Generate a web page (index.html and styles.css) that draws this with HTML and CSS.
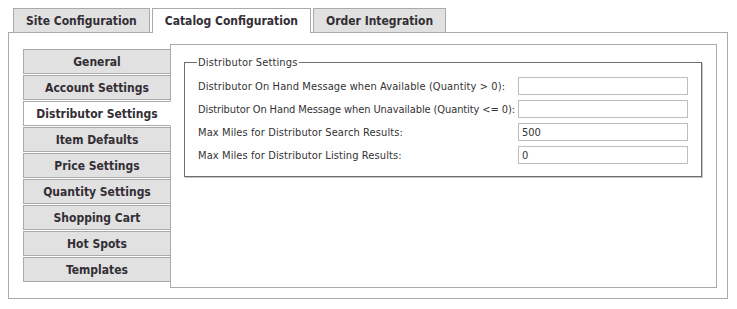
FILE: index.html
```html
<!DOCTYPE html>
<html>
<head>
<meta charset="utf-8">
<link rel="stylesheet" href="styles.css">
</head>
<body>
<div class="tabs">
  <div class="tab">Site Configuration</div>
  <div class="tab active">Catalog Configuration</div>
  <div class="tab">Order Integration</div>
</div>
<div class="panel">
  <div class="nav">
    <div class="nav-item">General</div>
    <div class="nav-item">Account Settings</div>
    <div class="nav-item active">Distributor Settings</div>
    <div class="nav-item">Item Defaults</div>
    <div class="nav-item">Price Settings</div>
    <div class="nav-item">Quantity Settings</div>
    <div class="nav-item">Shopping Cart</div>
    <div class="nav-item">Hot Spots</div>
    <div class="nav-item">Templates</div>
  </div>
  <div class="content">
    <fieldset class="group">
      <legend class="group-title">Distributor Settings</legend>
      <div class="form">
        <label class="lbl">Distributor On Hand Message when Available (Quantity &gt; 0):</label>
        <input class="field" type="text" value="">
        <label class="lbl lbl-tight">Distributor On Hand Message when Unavailable (Quantity &lt;= 0):</label>
        <input class="field" type="text" value="">
        <label class="lbl">Max Miles for Distributor Search Results:</label>
        <input class="field" type="text" value="500">
        <label class="lbl">Max Miles for Distributor Listing Results:</label>
        <input class="field" type="text" value="0">
      </div>
    </fieldset>
  </div>
</div>
</body>
</html>
```
FILE: styles.css
```css
* { box-sizing: border-box; }
body {
  margin: 8px;
  background: #fff;
  font-family: "DejaVu Sans Condensed", "DejaVu Sans", sans-serif;
  color: #333;
}
.tabs {
  display: flex;
  gap: 2px;
  padding-left: 5px;
  height: 24px;
  position: relative;
  z-index: 1;
}
.tab {
  height: 24px;
  padding: 1px 12px 0;
  border: 1px solid #aaa;
  border-bottom: none;
  background: #e1e1e1;
  font-weight: bold;
  font-size: 12px;
  line-height: 23px;
  color: #332e35;
}
.tab.active {
  background: #fff;
  height: 25px;
}
.panel {
  width: 720px;
  height: 267px;
  border: 1px solid #aaa;
  display: flex;
  align-items: flex-start;
  padding: 11px 10px 10px 14px;
}
.nav {
  width: 148px;
  margin-top: 5px;
  display: flex;
  flex-direction: column;
  gap: 1px;
  position: relative;
  z-index: 1;
}
.nav-item {
  height: 25px;
  border: 1px solid #aaa;
  background: #e1e1e1;
  text-align: center;
  font-weight: bold;
  font-size: 12px;
  line-height: 24px;
  color: #332e35;
}
.nav-item.active {
  background: #fff;
  border-right-color: #fff;
}
.content {
  flex: 1;
  height: 244px;
  margin-left: -1px;
  border: 1px solid #aaa;
  padding: 11px 14px 0 13px;
}
.group {
  margin: 0;
  padding: 8px 12px 12px 13px;
  border: 1px solid #6e6e6e;
  box-shadow: 1px 1px 0 #c4c4c4;
}
.group-title {
  padding: 0 1px;
  margin-left: -1px;
  font-size: 11px;
  letter-spacing: 0.15px;
  color: #333;
}
.form {
  display: grid;
  grid-template-columns: 320px 170px;
  row-gap: 5px;
  align-items: center;
}
.lbl {
  font-size: 11px;
  letter-spacing: 0.1px;
  white-space: nowrap;
  color: #333;
}
.lbl-tight {
  letter-spacing: -0.1px;
}
.field {
  width: 170px;
  height: 18px;
  border: 1px solid #bdbdbd;
  padding: 0 3px;
  font-family: inherit;
  font-size: 11px;
  color: #333;
  outline: none;
}
```
